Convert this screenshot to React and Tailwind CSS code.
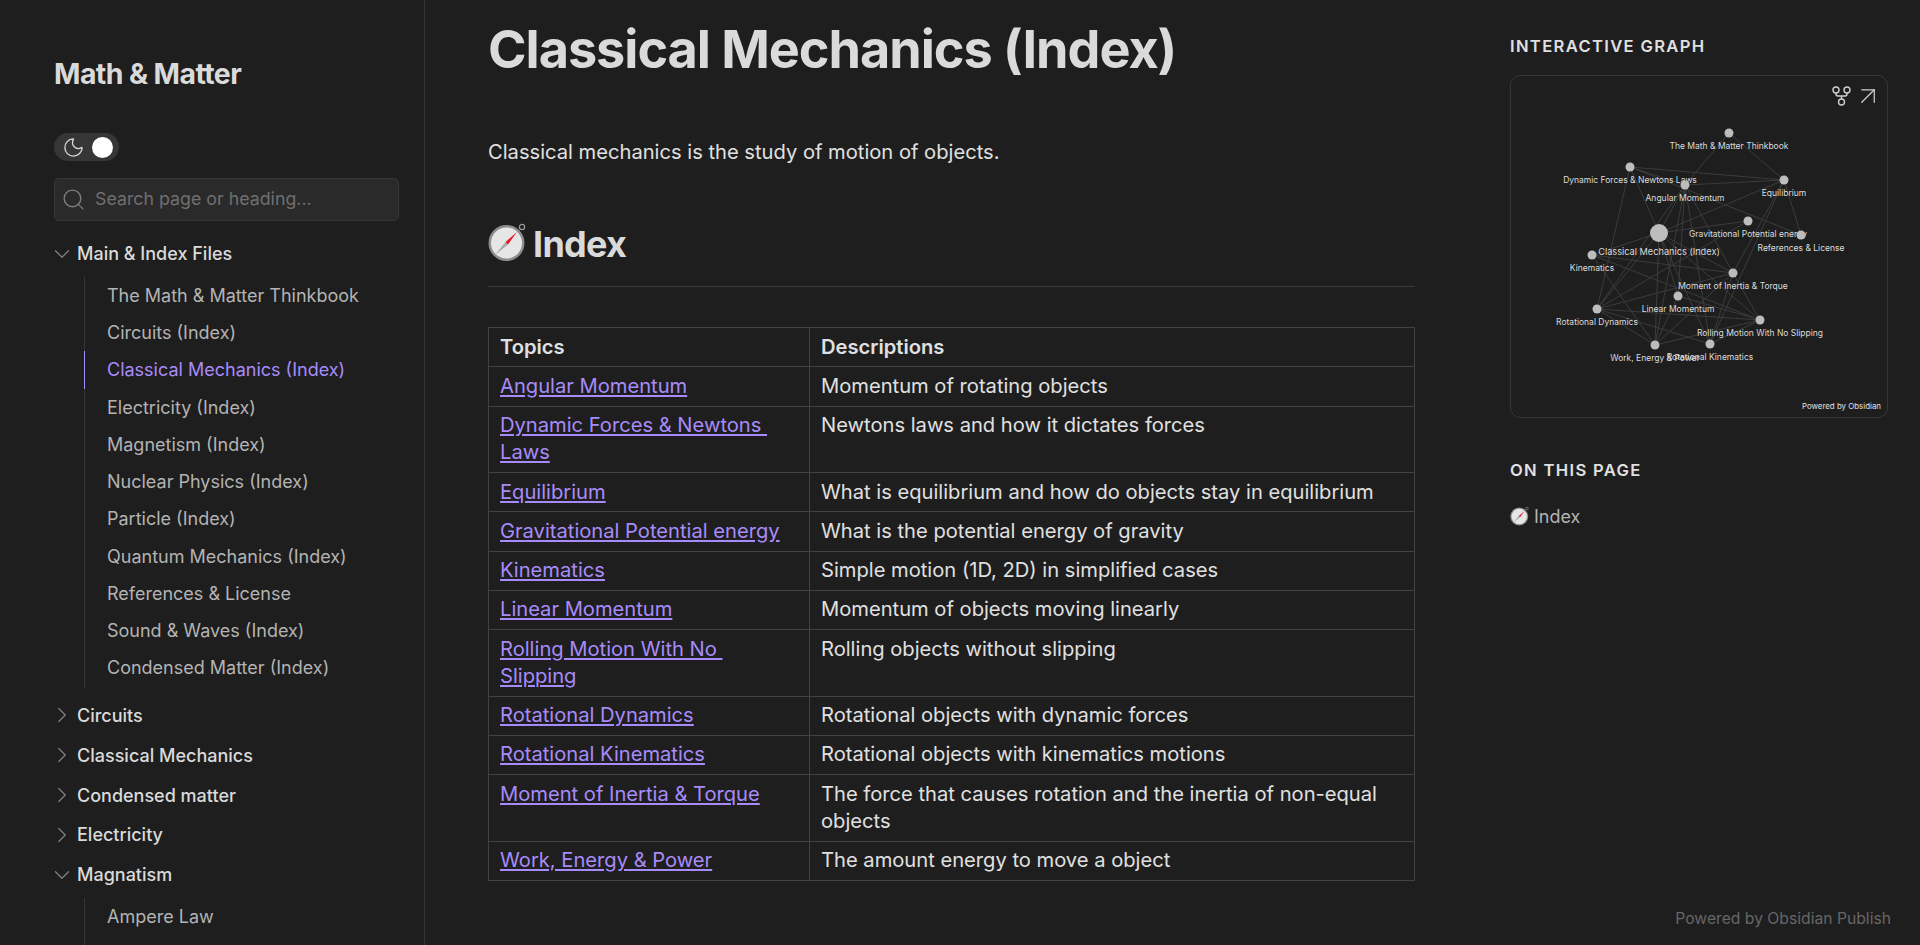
import { ChevronDown, ChevronRight, Moon, Search, ArrowUpRight } from 'lucide-react';

const indexFiles = [
    'The Math & Matter Thinkbook',
    'Circuits (Index)',
    'Classical Mechanics (Index)',
    'Electricity (Index)',
    'Magnetism (Index)',
    'Nuclear Physics (Index)',
    'Particle (Index)',
    'Quantum Mechanics (Index)',
    'References & License',
    'Sound & Waves (Index)',
    'Condensed Matter (Index)',
];

const closedFolders = ['Circuits', 'Classical Mechanics', 'Condensed matter', 'Electricity'];

const rows = [
    ['Angular Momentum', 'Momentum of rotating objects'],
    ['Dynamic Forces & Newtons Laws', 'Newtons laws and how it dictates forces'],
    ['Equilibrium', 'What is equilibrium and how do objects stay in equilibrium'],
    ['Gravitational Potential energy', 'What is the potential energy of gravity'],
    ['Kinematics', 'Simple motion (1D, 2D) in simplified cases'],
    ['Linear Momentum', 'Momentum of objects moving linearly'],
    ['Rolling Motion With No Slipping', 'Rolling objects without slipping'],
    ['Rotational Dynamics', 'Rotational objects with dynamic forces'],
    ['Rotational Kinematics', 'Rotational objects with kinematics motions'],
    ['Moment of Inertia & Torque', 'The force that causes rotation and the inertia of non-equal objects'],
    ['Work, Energy & Power', 'The amount energy to move a object'],
];

const nodes = {
    math: { x: 218, y: 58, label: 'The Math & Matter Thinkbook' },
    dyn: { x: 119, y: 92, label: 'Dynamic Forces & Newtons Laws' },
    ang: { x: 174, y: 110, label: 'Angular Momentum' },
    equ: { x: 273, y: 105, label: 'Equilibrium' },
    grav: { x: 237, y: 146, label: 'Gravitational Potential energy' },
    ref: { x: 290, y: 160, label: 'References & License' },
    cls: { x: 148, y: 158, r: 9, label: 'Classical Mechanics (Index)', size: 9.2 },
    kin: { x: 81, y: 180, label: 'Kinematics' },
    mom: { x: 222, y: 198, label: 'Moment of Inertia & Torque' },
    lin: { x: 167, y: 221, label: 'Linear Momentum' },
    rdyn: { x: 86, y: 234, label: 'Rotational Dynamics' },
    roll: { x: 249, y: 245, label: 'Rolling Motion With No Slipping' },
    work: { x: 144, y: 270, label: 'Work, Energy & Power' },
    rkin: { x: 199, y: 269, label: 'Rotational Kinematics' },
};

const edges = [
    ['math', 'ang'], ['math', 'equ'], ['dyn', 'equ'], ['dyn', 'cls'], ['dyn', 'ang'], ['dyn', 'rdyn'], ['dyn', 'ref'],
    ['ang', 'equ'], ['ang', 'cls'], ['ang', 'mom'], ['ang', 'lin'], ['ang', 'work'], ['ang', 'rkin'], ['ang', 'rdyn'],
    ['equ', 'cls'], ['equ', 'ref'], ['equ', 'mom'], ['equ', 'rkin'], ['cls', 'grav'], ['cls', 'kin'], ['cls', 'mom'],
    ['cls', 'lin'], ['cls', 'rdyn'], ['cls', 'roll'], ['cls', 'work'], ['cls', 'rkin'], ['grav', 'rdyn'], ['kin', 'roll'],
    ['kin', 'work'], ['kin', 'mom'], ['mom', 'rdyn'], ['mom', 'roll'], ['mom', 'work'], ['mom', 'rkin'], ['lin', 'roll'],
    ['lin', 'work'], ['rdyn', 'roll'], ['rdyn', 'work'], ['rdyn', 'rkin'], ['roll', 'rkin'], ['roll', 'work'],
];

function Compass({ className }) {
    return (
        <svg viewBox="0 0 40 40" className={className}>
            <circle cx="34" cy="5" r="2.6" fill="none" stroke="#9a9a9a" strokeWidth="1.2" />
            <circle cx="18.5" cy="21" r="18" fill="#8d8d8d" />
            <circle cx="18.5" cy="21" r="15.5" fill="#e6e6e6" />
            <path d="M7 33 L17.5 20 L20 22.5 Z" fill="#a9a9a9" />
            <path d="M29 10 L17.5 20 L20 22.5 Z" fill="#e5182b" />
        </svg>
    );
}

function GraphTypeIcon() {
    return (
        <svg viewBox="0 0 21 20" width="21" height="20" fill="none" stroke="currentColor" strokeWidth="1.4">
            <circle cx="5" cy="4" r="3" />
            <circle cx="16" cy="4" r="3" />
            <circle cx="10.5" cy="16" r="3" />
            <path d="M5 7 v1 a2 2 0 0 0 2 2 h7 a2 2 0 0 0 2 -2 V7 M10.5 10 v3" />
        </svg>
    );
}

function Graph() {
    return (
        <svg viewBox="0 1 376 341" className="block w-full h-full">
            {edges.map(([a, b]) => (
                <line
                    key={a + b}
                    x1={nodes[a].x}
                    y1={nodes[a].y}
                    x2={nodes[b].x}
                    y2={nodes[b].y}
                    stroke="#3c3c3c"
                    strokeWidth="1"
                />
            ))}
            {Object.entries(nodes).map(([id, n]) => (
                <g key={id}>
                    <circle cx={n.x} cy={n.y} r={n.r || 4.5} fill="#bdbdbd" />
                    <text
                        x={n.x}
                        y={n.y + (n.r ? 22 : 16)}
                        textAnchor="middle"
                        fill="#dcdcdc"
                        fontSize={n.size || 8.5}
                    >
                        {n.label}
                    </text>
                </g>
            ))}
            <text x="370" y="334" textAnchor="end" fill="#e0e0e0" fontSize="7.9">Powered by Obsidian</text>
        </svg>
    );
}

function FolderRow({ open, name, className }) {
    const Icon = open ? ChevronDown : ChevronRight;
    return (
        <div className={'flex items-center h-[39.8px] ' + (className || '')}>
            <Icon size={26} strokeWidth={1.2} className="-ml-[5px] mr-[2px] text-[#7e7e7e]" />
            <span className="text-[18px] font-medium text-[#dadada]">{name}</span>
        </div>
    );
}

function Sidebar() {
    return (
        <aside className="w-[425px] shrink-0 h-full overflow-hidden border-r border-[#363636] pl-[54px] pr-[25px] pt-[56px]">
            <div className="text-[28.4px] leading-[36px] font-bold tracking-[-0.02em] text-[#dadada]">Math &amp; Matter</div>

            <div className="mt-[41px] w-[65px] h-[28px] rounded-full bg-[#363636] flex items-center justify-between pl-[8px] pr-[6px]">
                <Moon size={23} strokeWidth={1.4} className="text-[#dadada]" />
                <span className="w-[21px] h-[21px] rounded-full bg-white" />
            </div>

            <div className="mt-[17px] h-[43px] rounded-[5px] border border-[#363636] bg-[#2a2a2a] flex items-center gap-[9px] pl-[6px]">
                <Search size={25} strokeWidth={1.3} className="text-[#7e7e7e]" />
                <span className="text-[17.8px] text-[#6f6f6f]">Search page or heading...</span>
            </div>

            <FolderRow open name="Main & Index Files" className="mt-[13px]" />

            <div className="ml-[30px] mt-[3px] border-l border-[#363636] pb-[1px]">
                {indexFiles.map((name, i) => (
                    <div
                        key={name}
                        className={
                            i === 2
                                ? 'h-[37.25px] leading-[37.25px] pl-[22px] text-[18px] text-[#a88bfa] border-l border-[#a88bfa] -ml-[1px]'
                                : 'h-[37.25px] leading-[37.25px] pl-[22px] text-[18px] text-[#b3b3b3]'
                        }
                    >
                        {name}
                    </div>
                ))}
            </div>

            <div className="mt-[8px]">
                {closedFolders.map((name) => (
                    <FolderRow key={name} name={name} />
                ))}
                <FolderRow open name="Magnatism" />
            </div>

            <div className="ml-[30px] mt-[3px] border-l border-[#363636] h-[60px]">
                <div className="h-[37.25px] leading-[37.25px] pl-[22px] text-[18px] text-[#b3b3b3]">Ampere Law</div>
            </div>
        </aside>
    );
}

function Article() {
    return (
        <main className="w-[927px] ml-[63px] shrink-0">
            <h1 className="text-[52.2px] leading-[68px] mt-[15px] font-bold tracking-[-0.02em] text-[#dadada]">Classical Mechanics (Index)</h1>

            <p className="mt-[55px] text-[20.15px] leading-[28px] text-[#e0e0e0]">Classical mechanics is the study of motion of objects.</p>

            <h2 className="mt-[55px] flex items-center gap-[5px] text-[36px] leading-[46px] font-bold tracking-[-0.02em] text-[#dadada]">
                <Compass className="w-[40px] h-[40px] -mt-[4px]" />
                Index
            </h2>
            <hr className="mt-[19px] border-[#3a3a3a]" />

            <table className="mt-[40px] w-full border-collapse text-[20.15px] leading-[27.25px] text-[#e0e0e0]">
                <thead>
                    <tr>
                        <th className="w-[321px] border border-[#424242] pl-[11px] pr-[14px] pt-[4.5px] pb-[6.5px] text-left font-semibold">Topics</th>
                        <th className="border border-[#424242] pl-[11px] pr-[14px] pt-[4.5px] pb-[6.5px] text-left font-semibold">Descriptions</th>
                    </tr>
                </thead>
                <tbody>
                    {rows.map(([topic, desc]) => (
                        <tr key={topic}>
                            <td className="border border-[#424242] pl-[11px] pr-[14px] pt-[4.5px] pb-[6.5px] align-top">
                                <a className="text-[#a88bfa] underline whitespace-break-spaces">{topic}</a>
                            </td>
                            <td className="border border-[#424242] pl-[11px] pr-[14px] pt-[4.5px] pb-[6.5px] align-top">{desc}</td>
                        </tr>
                    ))}
                </tbody>
            </table>
        </main>
    );
}

function RightPanel() {
    return (
        <aside className="flex-1 h-full flex flex-col pl-[95px] pr-[29px] pt-[35px] pb-[16px]">
            <div className="text-[16.6px] leading-[22px] font-semibold tracking-[0.08em] text-[#e0e0e0]">INTERACTIVE GRAPH</div>
            <div className="relative mt-[18px] h-[343px] w-[378px] -mr-[10px] rounded-[10px] border border-[#363636]">
                <Graph />
                <div className="absolute top-[5px] right-[4px] flex items-center gap-[1px] text-[#cfcfcf]">
                    <GraphTypeIcon />
                    <ArrowUpRight size={30} strokeWidth={1} />
                </div>
            </div>
            <div className="mt-[41px] text-[16.6px] leading-[22px] font-semibold tracking-[0.08em] text-[#e0e0e0]">ON THIS PAGE</div>
            <div className="mt-[22px] flex items-center gap-[4px] text-[18px] leading-[28px] text-[#b3b3b3]">
                <Compass className="w-[20px] h-[20px] -mt-[2px]" />
                Index
            </div>
            <div className="mt-auto text-right text-[15.7px] leading-[20px] text-[#666666] whitespace-nowrap">Powered by Obsidian Publish</div>
        </aside>
    );
}

export default function App() {
    return (
        <div className="flex h-screen w-full overflow-hidden bg-[#1e1e1e] font-['Inter',sans-serif]">
            <Sidebar />
            <Article />
            <RightPanel />
        </div>
    );
}
